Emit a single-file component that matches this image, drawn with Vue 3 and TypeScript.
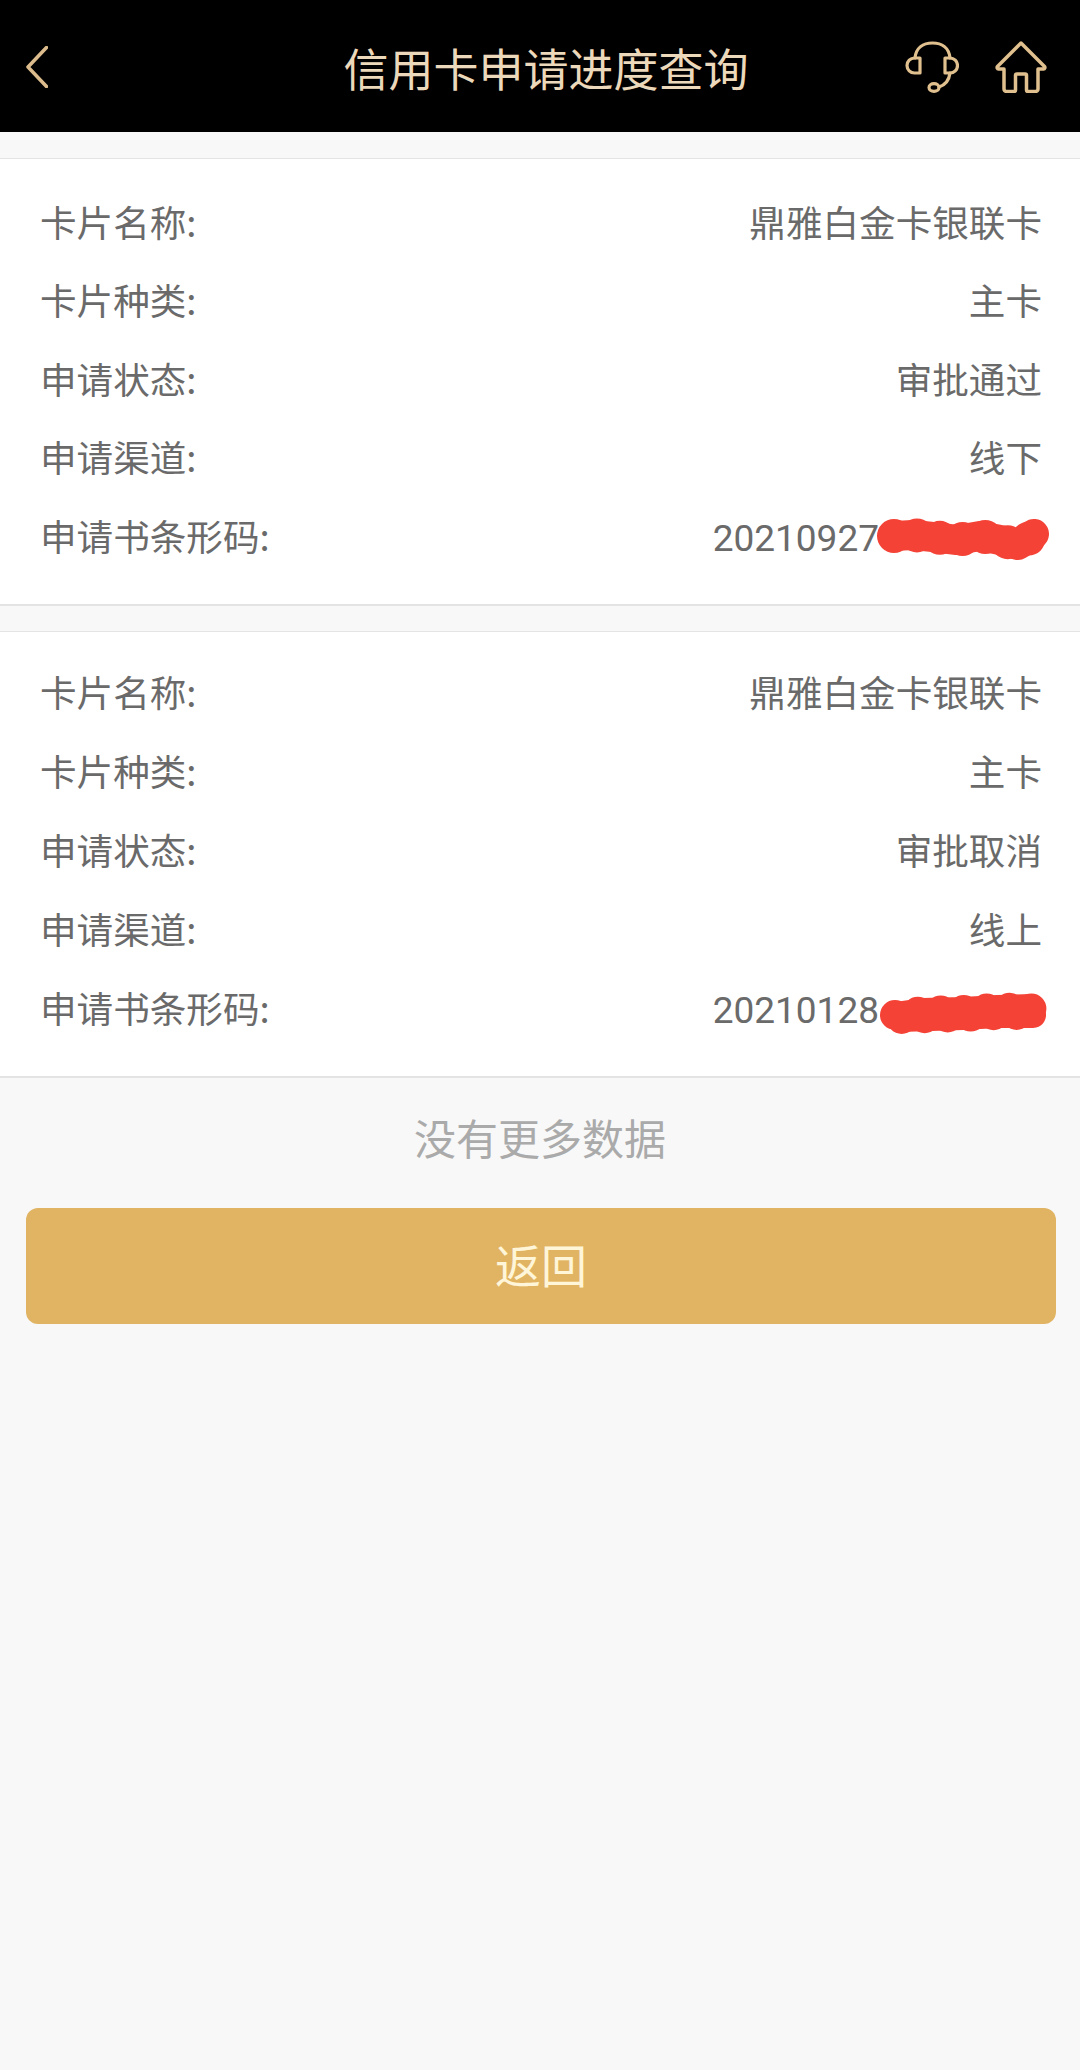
<template>
  <div class="page">
    <header class="top">
      <button class="icon-btn back" aria-label="返回">
        <svg width="22" height="42" viewBox="0 0 22 42" fill="none" stroke="#dcbb8c" stroke-width="3.500" stroke-linecap="round" stroke-linejoin="round">
          <path d="M20.500 1.500 2 21l18.500 19.500" />
        </svg>
      </button>
      <h1 class="title">信用卡申请进度查询</h1>
      <div class="actions">
        <svg width="54" height="52" viewBox="0 0 54 52" fill="none" stroke="#e0c08e" stroke-width="3.200" stroke-linecap="round" stroke-linejoin="round">
          <path d="M10 17C11 7 18 2 27.500 2S44 7 45 17" />
          <path d="M15 17H9.500a7.500 7.500 0 0 0 0 15H15Z" />
          <path d="M40 17h5a7.500 7.500 0 0 1 0 15h-5Z" />
          <path d="M45 32c-1 8-5 12-11 14" />
          <ellipse cx="29" cy="46.500" rx="5" ry="3.800" />
        </svg>
        <svg width="52" height="52" viewBox="0 0 52 52" fill="none" stroke="#e0c08e" stroke-width="3.500" stroke-linecap="round" stroke-linejoin="round">
          <path d="M26 2 2.500 25.500a1.500 1.500 0 0 0 1 2.500H9v20a2.500 2.500 0 0 0 2.500 2.500H19a1.500 1.500 0 0 0 1.500-1.500V34.500a1.500 1.500 0 0 1 1.500-1.500h8a1.500 1.500 0 0 1 1.500 1.500V49a1.500 1.500 0 0 0 1.500 1.500h7.500A2.500 2.500 0 0 0 43 48V28h5.500a1.500 1.500 0 0 0 1-2.500Z" />
        </svg>
      </div>
    </header>

    <section v-for="card in cards" :key="card.code" class="card">
      <div class="row"><span>卡片名称:</span><span>{{ card.name }}</span></div>
      <div class="row"><span>卡片种类:</span><span>{{ card.kind }}</span></div>
      <div class="row"><span>申请状态:</span><span>{{ card.status }}</span></div>
      <div class="row"><span>申请渠道:</span><span>{{ card.channel }}</span></div>
      <div class="row">
        <span>申请书条形码:</span>
        <span class="code">
          <span class="digits">{{ card.code }}</span>
          <span class="redact">
            <svg width="176" height="46" viewBox="0 0 176 46" fill="none" stroke="#f44336" stroke-linecap="round" stroke-linejoin="round">
              <path :d="card.scribble" :stroke-width="card.thickness" />
              <path :d="card.scribble" :stroke-width="card.thickness + 4" stroke-dasharray="0 23" />
            </svg>
          </span>
        </span>
      </div>
    </section>

    <p class="no-more">没有更多数据</p>
    <button class="back-btn">返回</button>
  </div>
</template>

<script setup lang="ts">
type CardInfo = {
  name: string
  kind: string
  status: string
  channel: string
  code: string
  scribble: string
  thickness: number
}

const cards: CardInfo[] = [
  {
    name: '鼎雅白金卡银联卡',
    kind: '主卡',
    status: '审批通过',
    channel: '线下',
    code: '20210927',
    scribble: 'M20 24 39 23 59 25 83 28 106 24 126 28 144 33 154 27 160 22',
    thickness: 30,
  },
  {
    name: '鼎雅白金卡银联卡',
    kind: '主卡',
    status: '审批取消',
    channel: '线上',
    code: '20210128',
    scribble: 'M21 30 49 26 89 25 123 23 157 22 159 30 123 30 89 32 26 34',
    thickness: 26,
  },
]
</script>

<style scoped>
.page { min-height: 2070px; background: #f8f8f8; font-family: "Noto Sans CJK SC", "Noto Sans", sans-serif; color: #6a6a6a; overflow: hidden }
.top { display: grid; grid-template-columns: 1fr auto 1fr; align-items: center; height: 132px; padding: 0 33px 0 26px; background: #000 }
.icon-btn { display: flex; padding: 0; border: 0; background: none; cursor: pointer }
.back { margin-top: 1px }
.title { margin: 4px 0 0 19px; font-size: 45px; font-weight: 400; line-height: 60px; color: #ecd8ba; white-space: nowrap }
.actions { display: flex; justify-content: flex-end; gap: 36px; margin-top: 1px }
.card { padding: 23px 38px 29px 40px; margin-top: 26px; background: #fff; border-top: 1px solid #e4e4e4; border-bottom: 2px solid #e4e4e4 }
.card + .card { margin-top: 25px; padding-top: 21px; padding-bottom: 29px }
.row { display: flex; justify-content: space-between; align-items: center; height: 78.500px; font-size: 36.600px; white-space: nowrap }
.card + .card .row { height: 78.900px }
.code { display: flex; align-items: center }
.digits { margin-top: 6px; font-family: Roboto, "Liberation Sans", sans-serif; font-size: 37px }
.redact { position: relative; width: 163px; height: 46px }
.redact svg { position: absolute; left: -5px; top: 0; overflow: visible }
.no-more { margin: 0; padding-top: 29px; font-size: 42px; line-height: 60px; text-align: center; color: #aaa }
.back-btn { display: block; width: 1030px; height: 116px; margin: 41px 0 0 26px; padding-bottom: 6px; border: 0; border-radius: 12px; background: #e1b464; color: #fff5d8; font: inherit; font-size: 46px; cursor: pointer }
</style>
